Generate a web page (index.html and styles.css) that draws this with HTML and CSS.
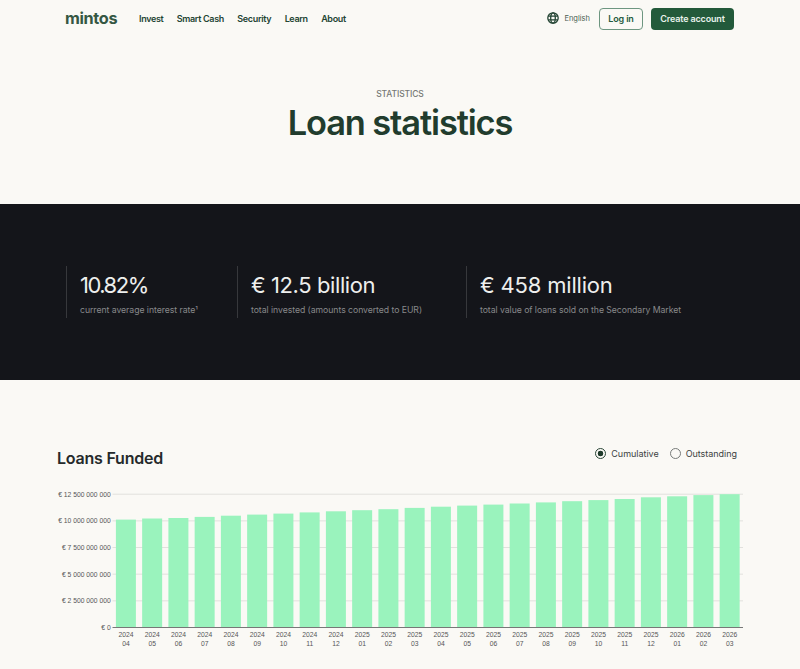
FILE: index.html
```html
<!DOCTYPE html>
<html lang="en">
<head>
<meta charset="utf-8">
<title>Loan statistics</title>
<link rel="stylesheet" href="styles.css">
</head>
<body>
<header class="header">
  <a class="logo">mintos</a>
  <nav class="nav"><a>Invest</a><a>Smart Cash</a><a>Security</a><a>Learn</a><a>About</a></nav>
  <div class="actions">
    <svg class="globe" viewBox="0 0 12 12"><circle cx="6" cy="6" r="5.2"/><ellipse cx="6" cy="6" rx="2.3" ry="5.2"/><path d="M1.2 4.2h9.6M1.2 7.8h9.6"/></svg>
    <span class="lang">English</span>
    <a class="btn btn-outline">Log in</a>
    <a class="btn btn-solid">Create account</a>
  </div>
</header>
<section class="hero">
  <p class="eyebrow">STATISTICS</p>
  <h1>Loan statistics</h1>
</section>
<section class="stats">
  <div class="stat stat-rate"><div class="value">10.82%</div><div class="label">current average interest rate¹</div></div>
  <div class="stat stat-invested"><div class="value">€ 12.5 billion</div><div class="label">total invested (amounts converted to EUR)</div></div>
  <div class="stat stat-sold"><div class="value">€ 458 million</div><div class="label">total value of loans sold on the Secondary Market</div></div>
</section>
<main class="funded">
  <div class="funded-head">
    <h2>Loans Funded</h2>
    <div class="radios">
      <span class="radio checked"></span><span class="opt opt-first">Cumulative</span>
      <span class="radio"></span><span class="opt">Outstanding</span>
    </div>
  </div>
  <svg class="chart" width="700" height="170" viewBox="50 484 700 170"></svg>
</main>
<script src="chart.js"></script>
</body>
</html>
```
FILE: styles.css
```css
* { box-sizing: border-box; }
body { margin: 0; width: 800px; height: 669px; overflow: hidden; background: #faf9f5; font-family: Inter, "Liberation Sans", sans-serif; color: #22262a; }
h1, h2, p { margin: 0; }
.header { height: 37px; padding: 0 66px 0 65px; display: flex; align-items: center; color: #234433; }
.logo { width: 74px; font-size: 16.3px; line-height: 20px; font-weight: 700; letter-spacing: -.35px; color: #355743; margin-top: -2px; }
.nav { display: flex; gap: 13.4px; font-size: 9px; font-weight: 600; letter-spacing: -.34px; }
.actions { margin-left: auto; display: flex; align-items: center; }
.globe { width: 12px; height: 12px; fill: none; stroke: #234433; stroke-width: 1.3; margin: -1px 5px 0 0; }
.lang { font-size: 7.5px; color: #4a5d52; margin-right: 9px; }
.btn { height: 22px; border-radius: 4px; font-size: 9px; font-weight: 600; display: flex; align-items: center; justify-content: center; letter-spacing: -.16px; }
.btn-outline { width: 44px; border: 1px solid #6d9680; color: #245a3d; margin-right: 8px; }
.btn-solid { width: 83px; background: #235a3b; color: #e8f2eb; }
.hero { height: 167px; padding-top: 51px; text-align: center; }
.eyebrow { font-size: 8.5px; line-height: 12px; font-weight: 500; color: #777976; letter-spacing: -.1px; }
h1 { font-size: 34.4px; line-height: 42px; margin-top: 2px; font-weight: 600; letter-spacing: -1.1px; color: #213c2d; }
.stats { height: 176px; background: #14151a; padding: 62px 0 0 66px; display: flex; }
.stat { height: 52px; border-left: 1px solid #37383c; padding-left: 13px; white-space: nowrap; }
.stat-rate { width: 171px; }
.stat-invested { width: 229px; }
.value { font-size: 22px; line-height: 28px; margin-top: 5px; color: #eeefed; font-weight: 400; letter-spacing: -.4px; }
.stat-rate .value { letter-spacing: -1.5px; }
.stat-sold .value { letter-spacing: -.18px; }
.label { font-size: 8.7px; line-height: 12px; margin-top: 5px; color: #88898b; letter-spacing: -.05px; }
.funded { padding: 64px 50px 0; }
.funded-head { height: 40px; padding: 0 13px 0 7px; display: flex; justify-content: space-between; }
h2 { font-size: 16px; line-height: 28px; font-weight: 600; letter-spacing: -.22px; color: #252a2b; }
.radios { display: flex; align-items: center; height: 19px; font-size: 9px; letter-spacing: -.03px; color: #3c4241; }
.radio { width: 11px; height: 11px; border: 1px solid #777b79; border-radius: 50%; margin-right: 5px; }
.checked { border-color: #294535; background: radial-gradient(circle, #1f3b2b 2.6px, transparent 3.1px); }
.opt-first { margin-right: 11px; }
.chart { display: block; font-family: "Liberation Sans", sans-serif; font-size: 6.75px; fill: #555; }
.grid { stroke: #e1e1dd; stroke-width: 1; }
.base { stroke: #777; stroke-width: 1; }
.bar { fill: #9af3bd; }
.ylab { text-anchor: end; }
.xlab { text-anchor: middle; }
```
FILE: chart.js
```js
const svg = document.querySelector(".chart");
function add(tag, cls, attrs, text) {
  const el = document.createElementNS("http://www.w3.org/2000/svg", tag);
  el.setAttribute("class", cls);
  for (const key in attrs) el.setAttribute(key, attrs[key]);
  if (text) el.textContent = text;
  svg.appendChild(el);
}
const left = 112.5, right = 743, bottom = 627.5, step = 26.66;
["€ 0", "€ 2 500 000 000", "€ 5 000 000 000", "€ 7 500 000 000", "€ 10 000 000 000", "€ 12 500 000 000"].forEach((label, i) => {
  const y = bottom - i * step;
  if (i) add("line", "grid", { x1: left, x2: right, y1: y, y2: y });
  add("text", "ylab", { x: 110.7, y: y + 2.4 }, label);
});
const tops = [519.6, 518.5, 518, 516.9, 515.7, 514.6, 513.6, 512.4, 511.3, 510.2, 509.2, 507.9, 506.7, 505.6, 504.6, 503.5, 502.4, 501.2, 500.1, 499, 497.3, 496.3, 495.1, 494.2];
tops.forEach((top, i) => {
  const center = 125.9 + i * 26.25;
  add("rect", "bar", { x: center - 10, y: top, width: 20, height: bottom - top });
  const month = i + 3;
  add("text", "xlab", { x: center, y: 636.7 }, String(2024 + Math.floor(month / 12)));
  add("text", "xlab", { x: center, y: 645.6 }, String(month % 12 + 1).padStart(2, "0"));
});
add("line", "base", { x1: left, x2: right, y1: bottom, y2: bottom });
```
